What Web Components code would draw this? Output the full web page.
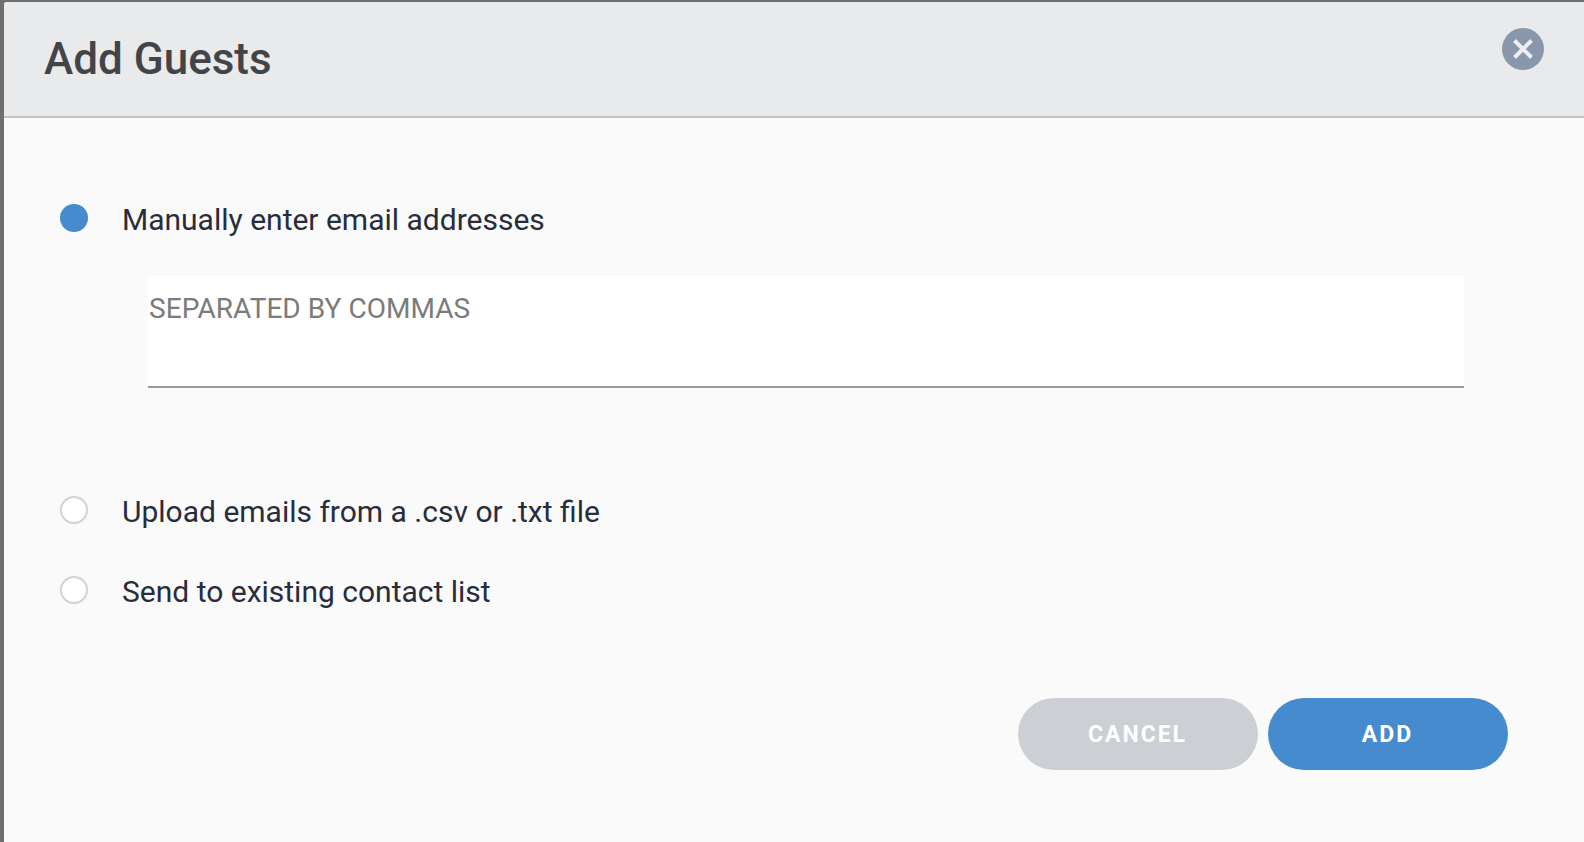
<!DOCTYPE html>
<html><head><meta charset="utf-8"><style>
html,body{margin:0;padding:0;height:842px;overflow:hidden;background:#6f6f6f;font-family:Roboto,"Liberation Sans",sans-serif}
</style></head><body>
<guest-dialog heading="Add Guests">
  <radio-row checked>Manually enter email addresses</radio-row>
  <email-field placeholder="SEPARATED BY COMMAS"></email-field>
  <radio-row style="margin-top:108px">Upload emails from a .csv or .txt file</radio-row>
  <radio-row style="margin-top:52px">Send to existing contact list</radio-row>
  <div slot="actions" style="display:flex;gap:10px">
    <pill-button kind="muted">CANCEL</pill-button>
    <pill-button kind="primary">ADD</pill-button>
  </div>
</guest-dialog>
<script>
class GuestDialog extends HTMLElement{
  constructor(){super();const s=this.attachShadow({mode:'open'});
  s.innerHTML=`<style>
  :host{display:flex;flex-direction:column;box-sizing:border-box;height:840px;margin:2px 0 0 4px;background:#fafafa;border-radius:3px 0 0 0;overflow:hidden}
  header{box-sizing:border-box;height:116px;flex:none;background:#e9eaec;border-bottom:2px solid #bfc3c8;display:flex;align-items:flex-start;justify-content:space-between;padding:0 40px 0 40px}
  h1{margin:32px 0 0;font:500 44px/50px Roboto,sans-serif;color:#434447}
  button{all:unset;margin-top:26px;width:42px;height:42px;border-radius:50%;background:#8997ad;display:flex;align-items:center;justify-content:center}
  main{flex:1;padding:86px 0 0 56px;display:flex;flex-direction:column}
  footer{display:flex;justify-content:flex-end;padding:0 76px 72px 0}
  </style>
  <header><h1></h1><button aria-label="Close"><svg width="24" height="24" viewBox="0 0 24 24"><path d="M3.5 3.5 20.5 20.5M20.5 3.5 3.5 20.5" stroke="#eceef1" stroke-width="4" fill="none"/></svg></button></header>
  <main><slot></slot></main><footer><slot name="actions"></slot></footer>`;
  s.querySelector('h1').textContent=this.getAttribute('heading');}
}
class RadioRow extends HTMLElement{
  constructor(){super();const s=this.attachShadow({mode:'open'});
  s.innerHTML=`<style>
  :host{display:flex;align-items:center;gap:34px;height:28px;font:400 30px/36px Roboto,sans-serif;color:#282d3b}
  i{box-sizing:border-box;flex:none;width:28px;height:28px;border-radius:50%;background:#fff;border:2px solid #cfd2d7}
  :host([checked]) i{background:#458bcd;border:none}
  span{padding-top:3px}
  </style><i></i><span><slot></slot></span>`;}
}
class EmailField extends HTMLElement{
  constructor(){super();const s=this.attachShadow({mode:'open'});
  s.innerHTML=`<style>
  :host{display:block;box-sizing:border-box;margin:44px 0 0 88px;width:1316px;height:112px;background:#fff;border-bottom:2px solid #9b9b9b;padding:15px 1px 0;font:400 28px/36px Roboto,sans-serif;letter-spacing:.05px;color:#7b7b7b}
  </style><span></span>`;
  s.querySelector('span').textContent=this.getAttribute('placeholder');}
}
class PillButton extends HTMLElement{
  constructor(){super();const s=this.attachShadow({mode:'open'});
  s.innerHTML=`<style>
  :host{display:flex;align-items:center;justify-content:center;box-sizing:border-box;padding:1px 1px 0 0;width:240px;height:72px;border-radius:36px;background:#458bcd;color:#fff;font:700 23px/28px Roboto,sans-serif;letter-spacing:2px}
  :host([kind=muted]){background:#cccfd3}
  </style><slot></slot>`;}
}
customElements.define('guest-dialog',GuestDialog);
customElements.define('radio-row',RadioRow);
customElements.define('email-field',EmailField);
customElements.define('pill-button',PillButton);
</script></body></html>
